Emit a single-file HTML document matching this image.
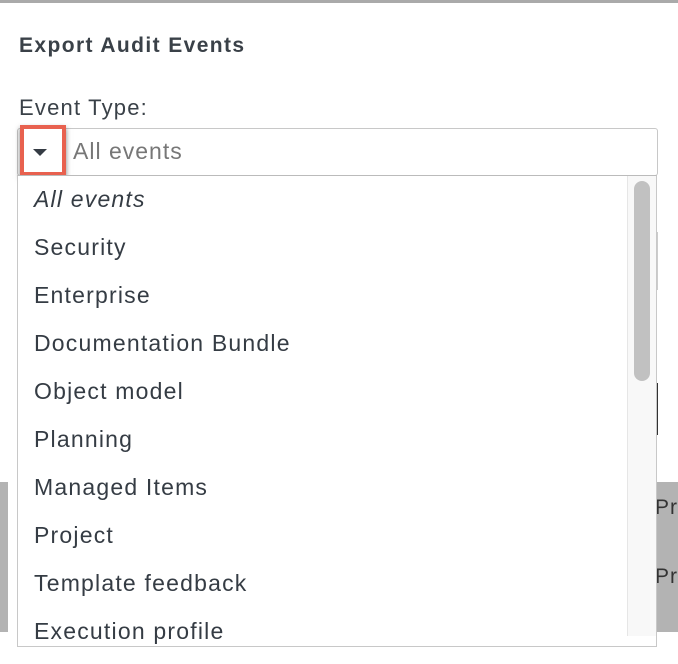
<!DOCTYPE html>
<html><head><style>
html,body{margin:0;padding:0;}
body{width:678px;height:632px;position:relative;overflow:hidden;background:#fff;font-family:"Liberation Sans",sans-serif;color:#353c44;}
.abs{position:absolute;}
</style></head><body>
<div class="abs" style="left:0;top:0;width:678px;height:3px;background:#aaa;"></div>
<div class="abs" style="left:0;top:482px;width:8px;height:150px;background:#b3b3b3;"></div>
<div class="abs" style="left:657px;top:482px;width:21px;height:150px;background:#b3b3b3;"></div>
<div class="abs" style="left:655px;top:496px;font-size:21px;letter-spacing:1px;color:#333;">Pr</div>
<div class="abs" style="left:655px;top:565px;font-size:21px;letter-spacing:1px;color:#333;">Pr</div>
<div class="abs" style="left:656px;top:232px;width:2px;height:58px;background:#ccc;"></div>
<div class="abs" style="left:656px;top:383px;width:2px;height:52px;background:#333;"></div>
<div class="abs" style="left:19px;top:34px;font-size:21px;letter-spacing:1.4px;font-weight:bold;color:#3a4148;">Export Audit Events</div>
<div class="abs" style="left:19px;top:95px;font-size:22px;letter-spacing:1.2px;color:#3a4148;">Event Type:</div>
<div class="abs" style="left:17px;top:128px;width:639px;height:46px;border:1px solid #c8c8c8;border-radius:3px;"></div>
<div class="abs" style="left:73px;top:138px;font-size:23px;letter-spacing:1px;color:#777;">All events</div>
<div class="abs" style="left:20px;top:125px;width:38px;height:43px;border:4px solid #e8614f;box-shadow:0 3px 5px rgba(0,0,0,.5);"></div>
<div class="abs" style="left:33px;top:149px;width:0;height:0;border-left:7px solid transparent;border-right:7px solid transparent;border-top:7px solid #353c44;"></div>
<div class="abs" style="left:17px;top:175px;width:638px;height:470px;border:1px solid #c8c8c8;border-top:1px solid #bbb;background:#fff;"></div>
<div class="abs" style="left:627px;top:176px;width:28px;height:460px;background:#f8f8f8;border-left:1px solid #e6e6e6;"></div>
<div class="abs" style="left:634px;top:181px;width:16px;height:200px;background:#c1c1c1;border-radius:8px;"></div>
<div class="abs" style="left:34px;top:184px;font-size:23px;letter-spacing:1.2px;line-height:30px;">
<div style="height:48px;font-style:italic;">All events</div>
<div style="height:48px;">Security</div>
<div style="height:48px;">Enterprise</div>
<div style="height:48px;">Documentation Bundle</div>
<div style="height:48px;">Object model</div>
<div style="height:48px;">Planning</div>
<div style="height:48px;">Managed Items</div>
<div style="height:48px;">Project</div>
<div style="height:48px;">Template feedback</div>
<div style="height:48px;">Execution profile</div>
</div>
</body></html>
